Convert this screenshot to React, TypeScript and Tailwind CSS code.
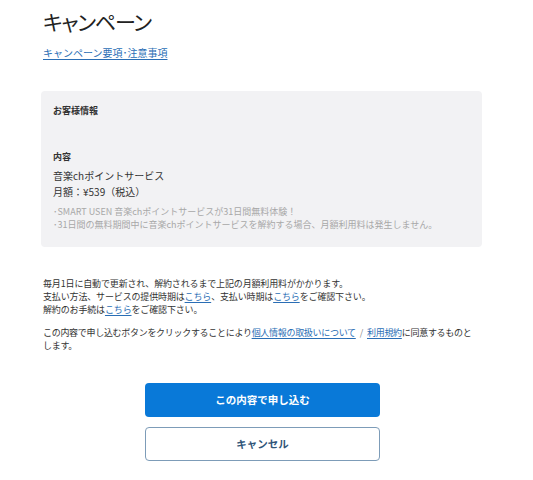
const FONT = "font-['Noto_Sans_CJK_JP','Noto_Sans',sans-serif]";

function Link({ children }: { children: React.ReactNode }) {
  return <a href="#" className="text-[#2a6eb5] underline decoration-[#2a6eb5] underline-offset-2">{children}</a>;
}

export default function App() {
  return (
    <div className={`${FONT} bg-white min-h-[480px] text-[#333]`}>
      <div className="ml-[41px] w-[441px] pt-[6px]">
        <h1 className="pl-[2px] text-[21px] leading-[30px] font-normal tracking-[-1.2px] text-[#222] [font-feature-settings:'palt']">キャンペーン</h1>
        <div className="mt-[9px] pl-[2px] text-[10px] leading-[16px]">
          <Link>キャンペーン要項･注意事項</Link>
        </div>

        {/* Customer info */}
        <div className="mt-[30px] rounded-[4px] bg-[#f2f2f4] pl-[12px] pr-4 pt-[13px] pb-[16px]">
          <div className="text-[9px] leading-[14px] font-semibold">お客様情報</div>
          <div className="mt-[32px] text-[9px] leading-[14px] font-semibold">内容</div>
          <div className="mt-[4px] text-[10px] leading-[16px]">
            <div>音楽chポイントサービス</div>
            <div>月額：¥539（税込）</div>
          </div>
          <div className="mt-[5px] text-[9px] leading-[13px] text-[#a8a8a8]">
            <div>･SMART USEN 音楽chポイントサービスが31日間無料体験！</div>
            <div>･31日間の無料期間中に音楽chポイントサービスを解約する場合、月額利用料は発生しません。</div>
          </div>
        </div>

        <div className="mt-[30px] pl-[2px] text-[9px] leading-[13px] tracking-[-0.15px]">
          <p>毎月1日に自動で更新され、解約されるまで上記の月額利用料がかかります。</p>
          <p>支払い方法、サービスの提供時期は<Link>こちら</Link>、支払い時期は<Link>こちら</Link>をご確認下さい。</p>
          <p>解約のお手続は<Link>こちら</Link>をご確認下さい。</p>
          <p className="mt-[10px] pr-[6px] tracking-[-0.3px]">
            この内容で申し込むボタンをクリックすることにより<Link>個人情報の取扱いについて</Link>
            <span className="mx-[4px] text-[#888]">/</span>
            <Link>利用規約</Link>に同意するものとします。
          </p>
        </div>

        <div className="mt-[31px] flex flex-col items-center gap-[10px] pl-[2px]">
          <button className="h-[34px] w-[235px] rounded-[4px] bg-[#0979d8] text-[10.5px] font-bold text-white">
            この内容で申し込む
          </button>
          <button className="h-[34px] w-[235px] rounded-[4px] border border-[#7d9cb8] bg-white text-[10.5px] font-bold text-[#2f5478]">
            キャンセル
          </button>
        </div>
      </div>
    </div>
  );
}
